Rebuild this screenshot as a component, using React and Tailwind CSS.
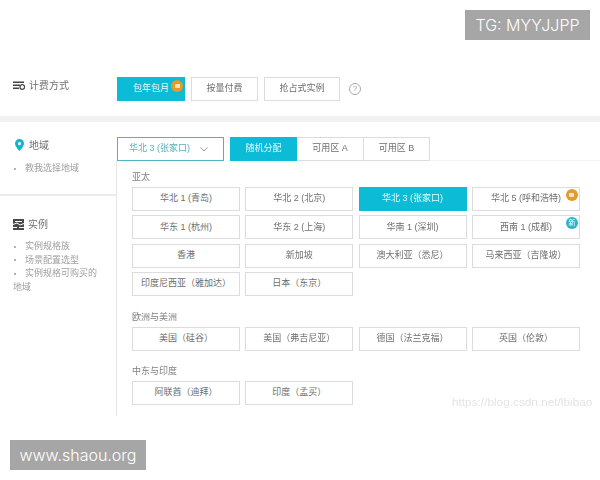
import React from 'react';

const asia = [
    { name: '华北 1 (青岛)' },
    { name: '华北 2 (北京)' },
    { name: '华北 3 (张家口)', active: true },
    { name: '华北 5 (呼和浩特)', badge: 'hot' },
    { name: '华东 1 (杭州)' },
    { name: '华东 2 (上海)' },
    { name: '华南 1 (深圳)' },
    { name: '西南 1 (成都)', badge: 'new' },
    { name: '香港' },
    { name: '新加坡' },
    { name: '澳大利亚（悉尼）' },
    { name: '马来西亚（吉隆坡）' },
    { name: '印度尼西亚（雅加达）' },
    { name: '日本（东京）' },
];
const europe = [
    { name: '美国（硅谷）' },
    { name: '美国（弗吉尼亚）' },
    { name: '德国（法兰克福）' },
    { name: '英国（伦敦）' },
];
const middleEast = [{ name: '阿联酋（迪拜）' }, { name: '印度（孟买）' }];

const HotBadge = ({ className }) => (
    <span className={`absolute w-[12px] h-[12px] rounded-full bg-[#e59a2c] flex items-center justify-center ${className}`}>
        <span className="w-[5px] h-[4px] bg-[#fbe6c4] rounded-[1px]" />
    </span>
);

const Tile = ({ name, active, badge }) => (
    <div
        className={`relative h-[24px] flex items-center justify-center text-[9px] border ${
            active ? 'bg-[#0cbcd6] border-[#0cbcd6] text-[#e8fafc]' : 'bg-white border-[#dcdcdc] text-[#6e6e6e]'
        }`}
    >
        {name}
        {badge === 'hot' && <HotBadge className="right-[1px] top-[1px]" />}
        {badge === 'new' && (
            <span className="absolute right-[1px] top-[1px] w-[12px] h-[12px] rounded-full bg-[#2bb3c9] text-white text-[7px] flex items-center justify-center">
                新
            </span>
        )}
    </div>
);

const Group = ({ title, items }) => (
    <div>
        <div className="h-[14px] mb-[2px] flex items-center text-[9px] text-[#808080]">{title}</div>
        <div className="grid grid-cols-[repeat(4,108px)] gap-x-[5.3px] gap-y-[4.4px]">
            {items.map((item) => (
                <Tile key={item.name} {...item} />
            ))}
        </div>
    </div>
);

const SideItem = ({ children }) => (
    <li className="leading-[13.5px]">
        <span className="inline-block w-[12px] align-middle">
            <span className="block ml-[1px] w-[2px] h-[2px] rounded-full bg-[#999999]" />
        </span>
        {children}
    </li>
);

const BillButton = ({ children, width }) => (
    <div className={`h-[24px] flex items-center justify-center border border-[#dcdcdc] text-[9px] text-[#6e6e6e] ${width}`}>
        {children}
    </div>
);

const App = () => {
    return (
        <div className="relative w-[600px] h-[480px] overflow-hidden bg-white font-['Liberation_Sans','Noto_Sans_CJK_SC',sans-serif]">
            <div className="pt-[77px] blur-[0.5px]">
                {/* billing */}
                <div className="flex h-[39px]">
                    <div className="w-[117px] pl-[13px] h-[17px] flex items-center gap-[4px] text-[10px] text-[#707070]">
                        <svg width="12" height="9" viewBox="0 0 12 9">
                            <path d="M0 0.5h11v1.6H0zM0 3.5h7v1.6H0zM0 6.5h6v1.6H0z" fill="#444444" />
                            <circle cx="9.3" cy="6" r="2.3" fill="none" stroke="#444444" strokeWidth="1.2" />
                        </svg>
                        计费方式
                    </div>
                    <div className="relative w-[68px] h-[24px] flex items-center justify-center bg-[#0cbcd6] text-[9px] text-[#e8fafc]">
                        包年包月
                        <HotBadge className="right-[2px] top-[3px]" />
                    </div>
                    <div className="ml-[6px]">
                        <BillButton width="w-[67px]">按量付费</BillButton>
                    </div>
                    <div className="ml-[6px]">
                        <BillButton width="w-[76px]">抢占式实例</BillButton>
                    </div>
                    <div className="ml-[9px] w-[12px] h-[12px] mt-[6px] rounded-full border border-[#aaaaaa] text-[#999999] text-[8px] flex items-center justify-center">
                        ?
                    </div>
                </div>
                <div className="h-[6px] bg-[#f2f2f2]" />

                <div className="flex">
                    {/* sidebar */}
                    <div className="w-[116px] shrink-0">
                        <div className="h-[74px] border-b-2 border-[#ebebeb] pt-[16px]">
                            <div className="pl-[15px] h-[14px] flex items-center gap-[5px] text-[10px] text-[#707070]">
                                <svg width="9" height="12" viewBox="0 0 9 12">
                                    <path
                                        fillRule="evenodd"
                                        d="M4.5 0a4.5 4.5 0 0 1 4.5 4.5C9 7.5 4.5 12 4.5 12S0 7.5 0 4.5A4.5 4.5 0 0 1 4.5 0zm0 3a1.6 1.6 0 1 0 0 3.2 1.6 1.6 0 0 0 0-3.2z"
                                        fill="#12b5cb"
                                    />
                                </svg>
                                地域
                            </div>
                            <ul className="pl-[13px] pt-[10px] text-[9px] text-[#a0a0a0]">
                                <SideItem>教我选择地域</SideItem>
                            </ul>
                        </div>
                        <div className="pt-[21px] pl-[13px] pr-[14px]">
                            <div className="h-[14px] flex items-center gap-[4px] text-[10px] text-[#707070]">
                                <svg width="11" height="11" viewBox="0 0 11 11">
                                    <rect width="11" height="11" fill="#4a4a4a" />
                                    <path d="M2 2.5h7M0 5.5l4-1.5 3 2 4-1.5M0 8.5h4M6 8.5h5" stroke="#ffffff" strokeWidth="1" fill="none" />
                                </svg>
                                实例
                            </div>
                            <ul className="mt-[9px] text-[9px] text-[#a0a0a0]">
                                <SideItem>实例规格族</SideItem>
                                <SideItem>场景配置选型</SideItem>
                                <SideItem>实例规格可购买的地域</SideItem>
                            </ul>
                        </div>
                    </div>

                    {/* region picker */}
                    <div className="flex-1 pt-[15px]">
                        <div className="flex h-[24px] ml-[1px]">
                            <div className="w-[107px] flex items-center justify-between pl-[11px] pr-[15px] border border-[#4fb3c2] text-[9px] text-[#5aaebb]">
                                华北 3 (张家口)
                                <svg width="8" height="5" viewBox="0 0 8 5">
                                    <path d="M0.5 0.5L4 4l3.5-3.5" fill="none" stroke="#999999" />
                                </svg>
                            </div>
                            <div className="ml-[6px] w-[67px] flex items-center justify-center bg-[#0cbcd6] text-[9px] text-[#e8fafc]">
                                随机分配
                            </div>
                            <div className="w-[67px] flex items-center justify-center border border-l-0 border-[#dcdcdc] text-[9px] text-[#6e6e6e]">
                                可用区 A
                            </div>
                            <div className="w-[66px] flex items-center justify-center border border-l-0 border-[#dcdcdc] text-[9px] text-[#6e6e6e]">
                                可用区 B
                            </div>
                            <div className="flex-1 border-b border-[#f4f4f4]" />
                        </div>
                        <div className="border-l border-[#e6e6e6] pl-[15px] pt-[10px] pb-[11px] flex flex-col gap-[14.5px]">
                            <Group title="亚太" items={asia} />
                            <Group title="欧洲与美洲" items={europe} />
                            <Group title="中东与印度" items={middleEast} />
                        </div>
                    </div>
                </div>
            </div>

            {/* watermarks */}
            <div className="absolute right-[10px] top-[10px] w-[125px] h-[30px] bg-[#a6a6a6] text-white text-[16px] font-light font-['Inter',sans-serif] flex items-center justify-center">
                TG: MYYJJPP
            </div>
            <div className="absolute left-[10px] top-[440px] w-[136px] h-[30px] bg-[#a6a6a6] text-white text-[16px] font-light font-['Inter',sans-serif] flex items-center justify-center">
                www.shaou.org
            </div>
            <div className="absolute left-[452px] top-[394px] text-[11.8px] text-[#e4e4e4] blur-[0.6px]">
                https://blog.csdn.net/lbibao
            </div>
        </div>
    );
};

export default App;
